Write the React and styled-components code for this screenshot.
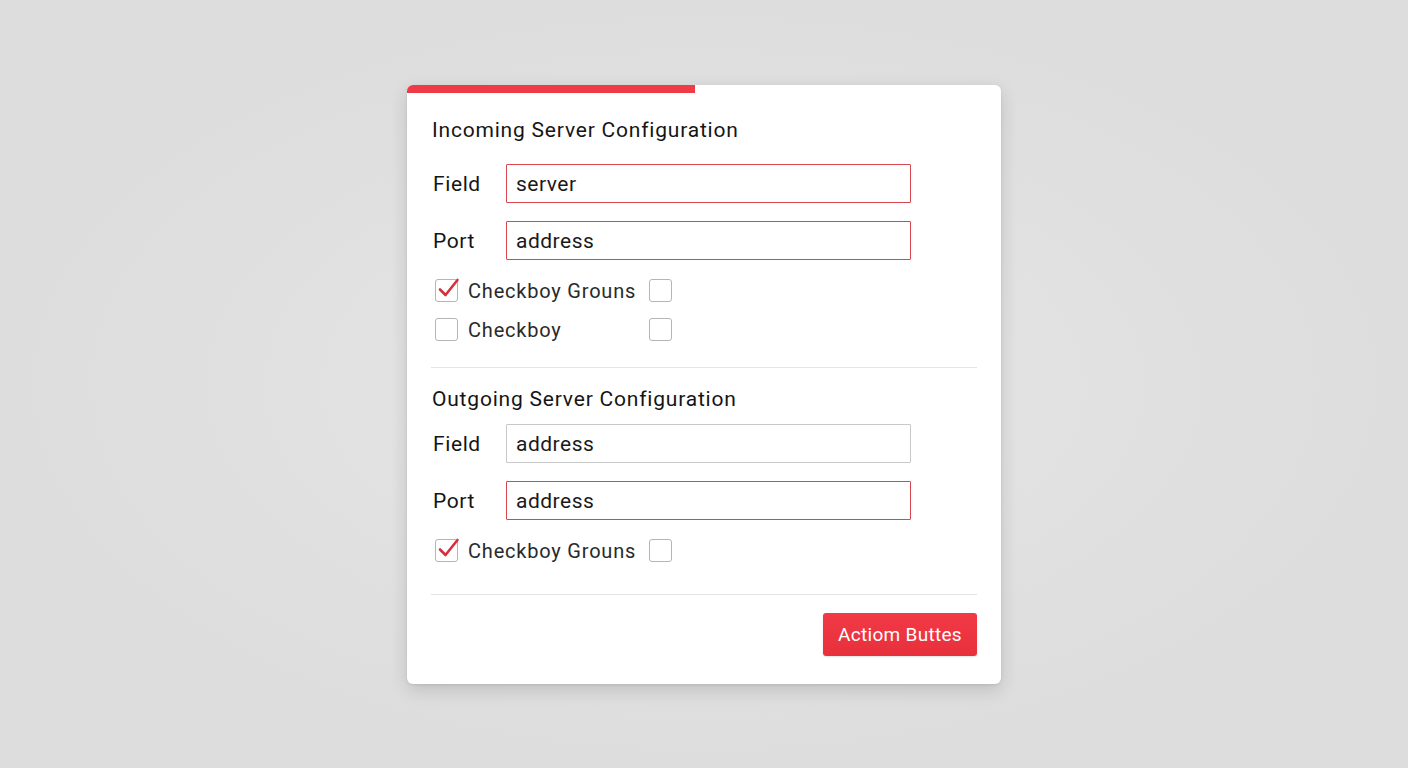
import styled, { createGlobalStyle } from "styled-components";

const GlobalStyle = createGlobalStyle`
  html, body {
    margin: 0;
    padding: 0;
    background: #dedede;
    font-family: Roboto, "Liberation Sans", sans-serif;
  }
`;

const Page = styled.div`
  width: 1408px;
  height: 768px;
  display: flex;
  justify-content: center;
  align-items: flex-start;
  padding-top: 85px;
  box-sizing: border-box;
  background: radial-gradient(ellipse at center, #e6e6e6 0%, #dddddd 70%);
`;

const Card = styled.div`
  width: 594px;
  background: #fff;
  border-radius: 6px;
  box-shadow: 0 6px 18px rgba(0, 0, 0, 0.14), 0 1px 3px rgba(0, 0, 0, 0.08);
  overflow: hidden;
`;

const Progress = styled.div`
  height: 8px;
  width: 288px;
  background: #ef3b45;
`;

const Body = styled.div`
  padding: 25px 24px 28px 25px;
`;

const Section = styled.section`
  display: flex;
  flex-direction: column;
`;

const Title = styled.h2`
  margin: 0 0 ${({ $gap }) => $gap}px;
  font-size: 21px;
  line-height: 24px;
  font-weight: 400;
  letter-spacing: 0.8px;
  color: #151515;
`;

const FieldRow = styled.div`
  display: flex;
  align-items: center;
  margin-bottom: ${({ $gap }) => $gap}px;
`;

const Label = styled.label`
  width: 73px;
  font-size: 21px;
  letter-spacing: 0.6px;
  color: #151515;
  padding-left: 1px;
`;

const Input = styled.input`
  width: 405px;
  height: 39px;
  box-sizing: border-box;
  border: 1.5px solid ${({ $error }) => ($error ? "#d8474f" : "#c9c9c9")};
  border-radius: 1px;
  padding: 0 9px;
  font-family: inherit;
  font-size: 21px;
  letter-spacing: 0.5px;
  color: #1a1a1a;
  outline: none;
  background: #fff;
`;

const CheckRow = styled.div`
  display: flex;
  align-items: center;
  height: 23px;
  padding-left: 3px;
  margin-top: ${({ $gap }) => $gap}px;
`;

const Box = styled.span`
  position: relative;
  width: 23px;
  height: 23px;
  box-sizing: border-box;
  border: 1.5px solid #b5b5b5;
  border-radius: 3px;
  flex-shrink: 0;
  svg {
    position: absolute;
    left: 1px;
    top: -3px;
  }
`;

const CheckText = styled.span`
  width: 181px;
  padding-left: 10px;
  font-size: 20px;
  letter-spacing: 0.8px;
  color: #2a2a2a;
`;

const Divider = styled.hr`
  border: 0;
  border-top: 1px solid #e4e4e4;
  margin: ${({ $top }) => $top}px 0 ${({ $bottom }) => $bottom}px -1px;
`;

const Footer = styled.div`
  display: flex;
  justify-content: flex-end;
`;

const Button = styled.button`
  height: 43px;
  width: 154px;
  padding: 0;
  border: 0;
  border-radius: 3px;
  background: linear-gradient(#f23a46, #e8303c);
  color: #fff;
  font-family: inherit;
  font-size: 19px;
  letter-spacing: 0.3px;
  cursor: pointer;
  box-shadow: 0 1px 2px rgba(0, 0, 0, 0.12);
`;

const Checkbox = ({ checked }) => (
  <Box>
    {checked && (
      <svg width="24" height="22" viewBox="0 0 24 22" fill="none">
        <path
          d="M3 12.5 L8.5 18 L20.5 3"
          stroke="#d6303c"
          strokeWidth="2.6"
          strokeLinecap="round"
          strokeLinejoin="round"
        />
      </svg>
    )}
  </Box>
);

const App = () => (
  <>
    <GlobalStyle />
    <Page>
      <Card>
        <Progress />
        <Body>
          <Section>
            <Title $gap={22}>Incoming Server Configuration</Title>
            <FieldRow $gap={18}>
              <Label>Field</Label>
              <Input $error defaultValue="server" />
            </FieldRow>
            <FieldRow $gap={0}>
              <Label>Port</Label>
              <Input $error defaultValue="address" />
            </FieldRow>
            <CheckRow $gap={19}>
              <Checkbox checked />
              <CheckText>Checkboy Grouns</CheckText>
              <Checkbox />
            </CheckRow>
            <CheckRow $gap={16}>
              <Checkbox />
              <CheckText>Checkboy</CheckText>
              <Checkbox />
            </CheckRow>
          </Section>
          <Divider $top={26} $bottom={19} />
          <Section>
            <Title $gap={13}>Outgoing Server Configuration</Title>
            <FieldRow $gap={18}>
              <Label>Field</Label>
              <Input defaultValue="address" />
            </FieldRow>
            <FieldRow $gap={0}>
              <Label>Port</Label>
              <Input $error defaultValue="address" />
            </FieldRow>
            <CheckRow $gap={19}>
              <Checkbox checked />
              <CheckText>Checkboy Grouns</CheckText>
              <Checkbox />
            </CheckRow>
          </Section>
          <Divider $top={32} $bottom={18} />
          <Footer>
            <Button>Actiom Buttes</Button>
          </Footer>
        </Body>
      </Card>
    </Page>
  </>
);

export default App;
